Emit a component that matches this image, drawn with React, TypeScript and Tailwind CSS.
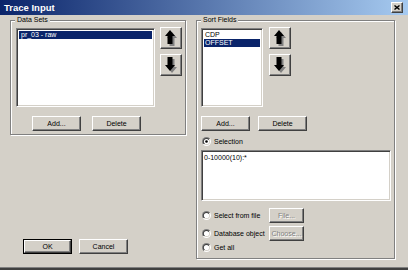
import React from "react";

const raised =
  "bg-[#d4d0c8] border border-t-white border-l-white border-r-[#404040] border-b-[#404040] shadow-[inset_-1px_-1px_0_#808080]";
const sunken =
  "bg-white border border-t-[#808080] border-l-[#808080] border-r-white border-b-white shadow-[inset_1px_1px_0_#404040,inset_-1px_-1px_0_#d4d0c8]";
const group =
  "relative border border-[#808080] shadow-[inset_1px_1px_0_#fff,1px_1px_0_#fff]";

function Btn({ label, w, disabled, def }: { label: string; w: string; disabled?: boolean; def?: boolean }) {
  const inner = (
    <div className={`${raised} h-full w-full flex items-center justify-center`}>
      <span
        className={
          disabled
            ? "text-[#808080] [text-shadow:1px_1px_0_#fff]"
            : "text-black"
        }
      >
        {label}
      </span>
    </div>
  );
  if (def) {
    return <div className={`${w} h-[15px] border border-black`}>{inner}</div>;
  }
  return <div className={`${w} h-[15px]`}>{inner}</div>;
}

function Arrow({ up }: { up?: boolean }) {
  const upPts = "5,0 10,6 7.5,6 7.5,14 2.5,14 2.5,6 0,6";
  const downPts = "2.5,0 7.5,0 7.5,8 10,8 5,14 0,8 2.5,8";
  const pts = up ? upPts : downPts;
  return (
    <div className={`${raised} w-[22px] h-[22px] flex items-center justify-center`}>
      <svg width="13" height="16" viewBox="0 0 13 16">
        <polygon points={pts} fill="#808080" transform="translate(2,2)" />
        <polygon points={pts} fill="#000" />
      </svg>
    </div>
  );
}

function Radio({ checked }: { checked?: boolean }) {
  return (
    <svg width="9" height="9" viewBox="0 0 9 9" className="shrink-0">
      <defs>
        <linearGradient id="rgo" x1="0" y1="0" x2="1" y2="1">
          <stop offset="0.5" stopColor="#808080" />
          <stop offset="0.5" stopColor="#ffffff" />
        </linearGradient>
        <linearGradient id="rgi" x1="0" y1="0" x2="1" y2="1">
          <stop offset="0.5" stopColor="#404040" />
          <stop offset="0.5" stopColor="#d4d0c8" />
        </linearGradient>
      </defs>
      <circle cx="4.5" cy="4.5" r="4.5" fill="url(#rgo)" />
      <circle cx="4.5" cy="4.5" r="3.5" fill="url(#rgi)" />
      <circle cx="4.5" cy="4.5" r="2.6" fill="#fff" />
      {checked && <circle cx="4.5" cy="4.5" r="1.3" fill="#000" />}
    </svg>
  );
}

function Label({ text }: { text: string }) {
  return (
    <div className="absolute left-[4px] top-[-6px] bg-[#d4d0c8] px-[2px] leading-[10px]">
      {text}
    </div>
  );
}

export default function App() {
  return (
    <div className="w-[408px] h-[270px] bg-[#d4d0c8] flex flex-col overflow-hidden font-['Liberation_Sans',Arial,sans-serif] text-[7px] leading-[9px] text-black">
      {/* Title bar */}
      <div className="h-[15px] shrink-0 flex items-center justify-between pl-[4px] pr-[5px] bg-[linear-gradient(to_right,#0a246a,#a6caf0)]">
        <span className="text-white font-bold text-[9.5px] leading-[12px]">Trace Input</span>
        <div className={`${raised} w-[12px] h-[11px] flex items-center justify-center`}>
          <svg width="6" height="5" viewBox="0 0 6 5">
            <path d="M0.5 0.5 L5.5 4.5 M5.5 0.5 L0.5 4.5" stroke="#000" strokeWidth="1.4" />
          </svg>
        </div>
      </div>

      {/* Body */}
      <div className="flex-1 flex pl-[10px] pt-[5px] gap-[10px]">
        {/* Left column */}
        <div className="w-[176px] flex flex-col">
          <div className={`${group} h-[115px] pt-[7px] pl-[5px]`}>
            <Label text="Data Sets" />
            <div className="flex">
              <div className={`${sunken} w-[139px] h-[79px] p-[2px]`}>
                <div className="h-[8px] bg-[#0a246a] text-white pl-[2px] leading-[8px]">pr_03 - raw</div>
              </div>
              <div className="ml-[5px] -mt-[1px] flex flex-col gap-[5px]">
                <Arrow up />
                <Arrow />
              </div>
            </div>
            <div className="flex mt-[9px] pl-[16px] gap-[11px]">
              <Btn label="Add..." w="w-[49px]" />
              <Btn label="Delete" w="w-[49px]" />
            </div>
          </div>
          <div className="flex mt-[104px] pl-[13px] gap-[7px]">
            <Btn label="OK" w="w-[49px]" def />
            <Btn label="Cancel" w="w-[49px]" />
          </div>
        </div>

        {/* Right column */}
        <div className={`${group} w-[199px] h-[239px] pt-[7px] pl-[4px]`}>
          <Label text="Sort Fields" />
          <div className="flex">
            <div className={`${sunken} w-[62px] h-[79px] p-[2px]`}>
              <div className="h-[8px] pl-[1px] leading-[8px]">CDP</div>
              <div className="h-[8px] bg-[#0a246a] text-white pl-[1px] leading-[8px]">OFFSET</div>
            </div>
            <div className="ml-[6px] -mt-[1px] flex flex-col gap-[5px]">
              <Arrow up />
              <Arrow />
            </div>
          </div>
          <div className="flex mt-[9px] gap-[8px]">
            <Btn label="Add..." w="w-[49px]" />
            <Btn label="Delete" w="w-[49px]" />
          </div>
          <div className="flex items-center mt-[6px] h-[9px] gap-[3px] pl-[1px]">
            <Radio checked />
            <span>Selection</span>
          </div>
          <div className={`${sunken} mt-[4px] w-[190px] h-[51px] px-[2px] pt-[2px]`}>
            0-10000(10):*
          </div>
          <div className="flex items-center mt-[7px] h-[15px]">
            <div className="w-[68px] flex items-center gap-[3px] pl-[1px]">
              <Radio />
              <span>Select from file</span>
            </div>
            <Btn label="File..." w="w-[35px]" disabled />
          </div>
          <div className="flex items-center mt-[3px] h-[15px]">
            <div className="w-[68px] flex items-center gap-[3px] pl-[1px]">
              <Radio />
              <span className="whitespace-nowrap">Database object</span>
            </div>
            <Btn label="Choose..." w="w-[35px]" disabled />
          </div>
          <div className="flex items-center mt-[1px] h-[10px] gap-[3px] pl-[1px]">
            <Radio />
            <span>Get all</span>
          </div>
        </div>
      </div>

      {/* Bottom frame */}
      <div className="h-[1px] shrink-0 bg-[#808080]" />
      <div className="h-[2px] shrink-0 bg-[#404040]" />
    </div>
  );
}
